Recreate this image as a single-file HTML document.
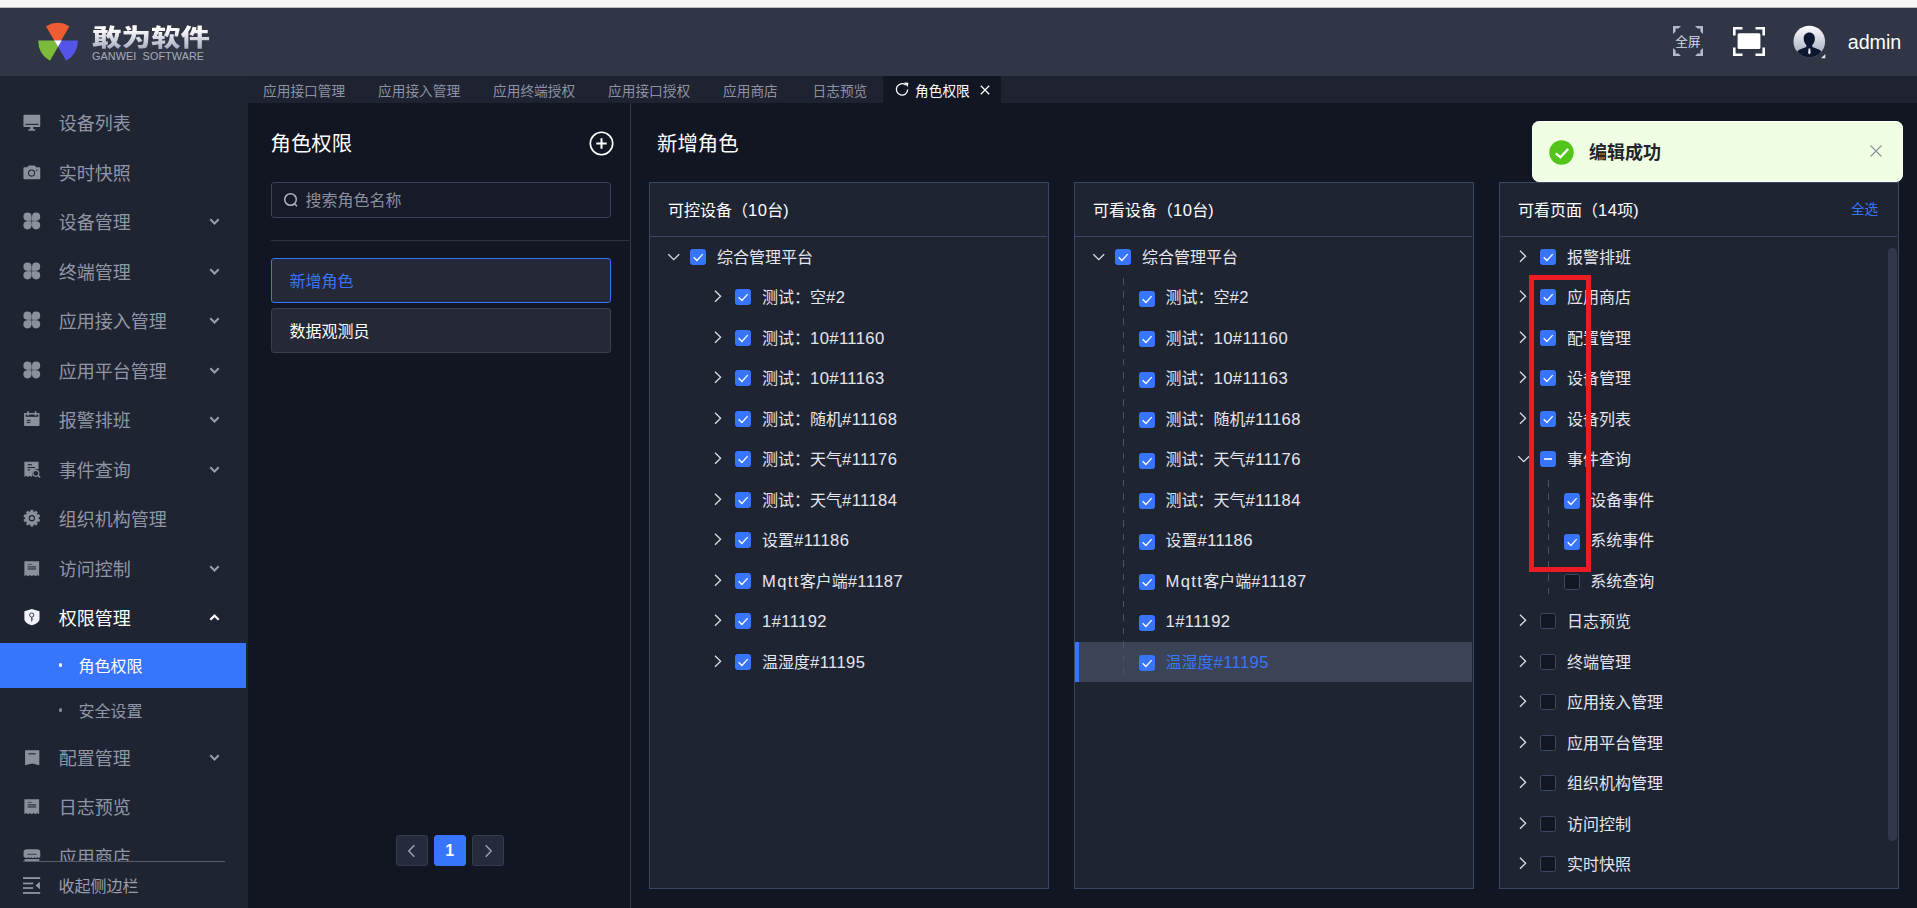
<!DOCTYPE html>
<html lang="zh-CN">
<head>
<meta charset="utf-8">
<title>角色权限</title>
<style>
*{box-sizing:border-box;margin:0;padding:0}
html,body{width:1917px;height:908px;overflow:hidden;background:#121622}
body{position:relative;font-family:"Liberation Sans","Noto Sans CJK SC",sans-serif;color:#fff;font-size:16px}
.abs{position:absolute}
#strip{position:absolute;left:0;top:0;width:1917px;height:8px;background:linear-gradient(#f7f7f7 0,#f7f7f7 7px,#bcbdc2 7px,#bcbdc2 8px)}
#header{position:absolute;left:0;top:8px;width:1917px;height:68px;background:#313647}
#sidebar{position:absolute;left:0;top:76px;width:248px;height:832px;background:#1f2432;overflow:hidden}
#tabbar{position:absolute;left:248px;top:76px;width:1669px;height:27px;background:#1e2231}
#main{position:absolute;left:248px;top:103px;width:1669px;height:805px;background:#121622}
/* header */
.logo-cn{position:absolute;left:91.500px;top:14.800px;font-size:23.600px;line-height:30px;font-weight:900;letter-spacing:0;white-space:nowrap;transform:scaleX(1.25);transform-origin:0 0;
  background:linear-gradient(#ffffff 20%,#a9adc0 85%);-webkit-background-clip:text;background-clip:text;color:transparent}
.logo-en{position:absolute;left:92px;top:42.300px;font-size:10.800px;line-height:12px;color:#a7abbd;white-space:pre;letter-spacing:.1px}
.admin{position:absolute;left:1847.700px;top:22.200px;font-size:19.700px;line-height:24px;color:#fff}
.fs-txt{position:absolute;left:1675.300px;top:26px;font-size:12.600px;line-height:16px;color:#d5d8e4;white-space:nowrap}
/* tabs */
.tab{position:absolute;top:0;height:27px;line-height:31.500px;font-size:13.7px;color:#8d92a3;white-space:nowrap}
.tab.on{background:#121622;color:#fff}
/* sidebar */
.mi{position:absolute;left:0;width:248px;height:49.5px}
.mi .t{position:absolute;left:58.800px;top:1.800px;line-height:49.5px;font-size:18px;color:#9196a6;white-space:nowrap}
.mi svg.ic{position:absolute;left:22.700px;top:15.900px;width:17.700px;height:17.700px;overflow:visible}
.mi svg.ch{position:absolute;left:209px;top:20px;width:11px;height:9px}
.mi.on .t{color:#fff}
.si{position:absolute;left:0;width:246px;height:45px}
.si .t{position:absolute;left:78.500px;top:0;line-height:47.500px;font-size:16px;color:#9196a6;white-space:nowrap}
.si .d{position:absolute;left:59px;top:20px;width:3.4px;height:4.6px;border-radius:1.6px;background:#858a9a}
.si.on{background:#3875ff}
.si.on .t{color:#fff}
.si.on .d{background:#fff}
/* role panel */
.h1{position:absolute;margin-top:1.200px;font-size:20.400px;line-height:28px;color:#fff;white-space:nowrap}
.role{position:absolute;left:23px;width:340px;height:45px;border:1px solid #3a3f50;border-radius:3px;background:#252836;font-size:16px;line-height:45.500px;padding-left:17.500px;color:#fff}
.role.on{border-color:#3875ff;color:#3875ff}
.pg{position:absolute;top:732px;width:31.500px;height:31px;border:1px solid #363b4d;border-radius:3px;background:#252a3c}
/* panels */
.panel{position:absolute;top:79px;width:400px;height:707px;border:1px solid #3b4661;background:#1f2433}
.panel .hd{position:absolute;left:0;top:0;width:397px;height:54px;border-bottom:1px solid #3b4661}
.panel .hd .t{position:absolute;left:18px;top:0;line-height:55.500px;font-size:16px;color:#fff;white-space:pre}
.row{position:absolute;left:0;width:398px;height:40.5px}
.row .t{position:absolute;top:.900px;line-height:40.500px;font-size:16px;color:#e4e6ee;white-space:nowrap}
.cb{position:absolute;width:16px;height:16px;border-radius:2.500px;background:#3875ff;border:1px solid #3875ff}
.cb.off{background:#131724;border-color:#3f4865}
.cb svg{position:absolute;left:-1px;top:-1px;width:16px;height:16px}
.arw{position:absolute;width:8px;height:14px}
.arw.dn{width:14px;height:8px}
.row.hl{background:#3b4356;border-left:4px solid #3875ff;height:40px;width:396.500px}
.row.hl .cb{margin-left:-4px}
.row.hl .t{color:#3875ff;margin-left:-4px}
.l{font-size:16.600px;letter-spacing:.4px}
.l.m{letter-spacing:1.35px}
.dash{position:absolute;width:1px;background:repeating-linear-gradient(180deg,#50535f 0,#50535f 6.600px,transparent 6.600px,transparent 13.450px)}
</style>
</head>
<body>
<div id="strip"></div>
<div id="header">
  <svg class="abs" style="left:34px;top:12px" width="48" height="48" viewBox="34 20 48 48">
    <path d="M57.7 46.5 L45.95 26.15 A23.5 23.5 0 0 1 69.45 26.15 Z" fill="#f05c32"/>
    <path d="M61.7 40.5 L38.2 40.5 A23.5 23.5 0 0 0 49.95 60.85 Z" fill="#7cbb3a"/>
    <path d="M54.4 40.5 L77.9 40.5 A23.5 23.5 0 0 1 66.15 60.85 Z" fill="#5454e8"/>
    <path d="M54.4 40.5 L61.7 40.5 L58 46.800 Z" fill="#fff"/>
  </svg>
  <div class="logo-cn">敢为软件</div>
  <div class="logo-en">GANWEI  SOFTWARE</div>
  <!-- fullscreen text icon -->
  <svg class="abs" style="left:1673px;top:18px" width="30" height="30" viewBox="0 0 30 30" fill="#b3b8cc">
    <path d="M0 0H8L5.5 2.6H2.6V5.5L0 8Z"/><path d="M30 0V8L27.4 5.5V2.6H24.5L22 0Z"/>
    <path d="M0 30V22L2.6 24.5V27.4H5.5L8 30Z"/><path d="M30 30H22L24.5 27.4H27.4V24.5L30 22Z"/>
  </svg>
  <div class="fs-txt">全屏</div>
  <svg class="abs" style="left:1733px;top:19px" width="32" height="29" viewBox="0 0 32 29" fill="none" stroke="#fff" stroke-width="2.6">
    <path d="M1.3 8.5V1.3H9.5M22.5 1.3H30.7V8.5M30.7 20.5V27.7H22.5M9.5 27.7H1.3V20.5"/>
    <rect x="4.6" y="6.3" width="22.8" height="15.6" rx="1.5" fill="#fff" stroke="none"/>
  </svg>
  <svg class="abs" style="left:1793px;top:17px" width="34" height="34" viewBox="0 0 34 34">
    <defs><linearGradient id="ag" x1="0" y1="0" x2="0" y2="1"><stop offset="0" stop-color="#fdfdfe"/><stop offset="1" stop-color="#9ea6bb"/></linearGradient>
    <clipPath id="ac"><circle cx="16.3" cy="16.5" r="15.8"/></clipPath></defs>
    <circle cx="16.3" cy="16.5" r="15.8" fill="url(#ag)"/>
    <g clip-path="url(#ac)" fill="#0e1730">
      <path d="M16.3 7.6c3.3 0 5.6 2.5 5.6 6 0 2.6-1.1 5-2.6 6.300v2.100l6.600 2.600c1.800.7 2.600 2 2.900 4v4.500h-25v-4.500c.3-2 1.100-3.300 2.900-4l6.600-2.600v-2.100c-1.500-1.300-2.600-3.700-2.600-6.300 0-3.500 2.300-6 5.600-6z"/>
    </g>
    <path d="M15.600 23.500h1.600l.5 4.500-1.300 1.600-1.300-1.600z" fill="#e6e9f0"/>
    <path d="M32.300 29v4.300h-4.300z" fill="#e3e6ee"/>
  </svg>
  <div class="admin">admin</div>
</div>
<div id="sidebar">
<div class="mi" style="top:22.25px"><svg class="ic" viewBox="0 0 18 18" fill="#8c909c"><path d="M1.3.85h15.400c.5 0 .85.350.85.850v10.750c0 .5-.350.850-.850.850H1.3c-.5 0-.85-.350-.85-.850V1.700c0-.5.350-.850.850-.850z"/><rect x="2.300" y="10" width="13.500" height="1.100" fill="#1f2432"/><path d="M7.400 13.300h3v2.100h2.100v1.600H5.300v-1.600h2.100z"/></svg><span class="t">设备列表</span></div>
<div class="mi" style="top:71.75px"><svg class="ic" viewBox="0 0 18 18" fill="#8c909c"><path d="M5.900 1.400h5.900l1.700 2h3.200c.5 0 .85.350.85.850v10.500c0 .5-.350.850-.850.850H1.300c-.5 0-.85-.350-.85-.850V4.250c0-.5.350-.850.850-.850h2.900z"/><circle cx="8.750" cy="9.200" r="3.650" fill="#1f2432"/><circle cx="8.750" cy="9.200" r="2.600"/><circle cx="14.100" cy="6.250" r=".75" fill="#1f2432"/></svg><span class="t">实时快照</span></div>
<div class="mi" style="top:121.25px"><svg class="ic" viewBox="0 0 18 18" fill="#8c909c"><circle cx="4.55" cy="3.75" r="4.15"/><rect x="4.55" y="3.75" width="4.15" height="4.15"/><circle cx="13.35" cy="3.75" r="4.15"/><rect x="9.20" y="3.75" width="4.15" height="4.15"/><circle cx="4.55" cy="12.55" r="4.15"/><rect x="4.55" y="8.40" width="4.15" height="4.15"/><circle cx="13.35" cy="12.55" r="4.15"/><rect x="9.20" y="8.40" width="4.15" height="4.15"/></svg><span class="t">设备管理</span><svg class="ch" viewBox="0 0 11 9" fill="none" stroke="#9a9eac" stroke-width="2"><path d="M1.300 2.300L5.500 6.500 9.700 2.300"/></svg></div>
<div class="mi" style="top:170.75px"><svg class="ic" viewBox="0 0 18 18" fill="#8c909c"><circle cx="4.55" cy="3.75" r="4.15"/><rect x="4.55" y="3.75" width="4.15" height="4.15"/><circle cx="13.35" cy="3.75" r="4.15"/><rect x="9.20" y="3.75" width="4.15" height="4.15"/><circle cx="4.55" cy="12.55" r="4.15"/><rect x="4.55" y="8.40" width="4.15" height="4.15"/><circle cx="13.35" cy="12.55" r="4.15"/><rect x="9.20" y="8.40" width="4.15" height="4.15"/></svg><span class="t">终端管理</span><svg class="ch" viewBox="0 0 11 9" fill="none" stroke="#9a9eac" stroke-width="2"><path d="M1.300 2.300L5.500 6.500 9.700 2.300"/></svg></div>
<div class="mi" style="top:220.25px"><svg class="ic" viewBox="0 0 18 18" fill="#8c909c"><circle cx="4.55" cy="3.75" r="4.15"/><rect x="4.55" y="3.75" width="4.15" height="4.15"/><circle cx="13.35" cy="3.75" r="4.15"/><rect x="9.20" y="3.75" width="4.15" height="4.15"/><circle cx="4.55" cy="12.55" r="4.15"/><rect x="4.55" y="8.40" width="4.15" height="4.15"/><circle cx="13.35" cy="12.55" r="4.15"/><rect x="9.20" y="8.40" width="4.15" height="4.15"/></svg><span class="t">应用接入管理</span><svg class="ch" viewBox="0 0 11 9" fill="none" stroke="#9a9eac" stroke-width="2"><path d="M1.300 2.300L5.500 6.500 9.700 2.300"/></svg></div>
<div class="mi" style="top:269.75px"><svg class="ic" viewBox="0 0 18 18" fill="#8c909c"><circle cx="4.55" cy="3.75" r="4.15"/><rect x="4.55" y="3.75" width="4.15" height="4.15"/><circle cx="13.35" cy="3.75" r="4.15"/><rect x="9.20" y="3.75" width="4.15" height="4.15"/><circle cx="4.55" cy="12.55" r="4.15"/><rect x="4.55" y="8.40" width="4.15" height="4.15"/><circle cx="13.35" cy="12.55" r="4.15"/><rect x="9.20" y="8.40" width="4.15" height="4.15"/></svg><span class="t">应用平台管理</span><svg class="ch" viewBox="0 0 11 9" fill="none" stroke="#9a9eac" stroke-width="2"><path d="M1.300 2.300L5.500 6.500 9.700 2.300"/></svg></div>
<div class="mi" style="top:319.25px"><svg class="ic" viewBox="0 0 18 18" fill="#8c909c"><path d="M1.100 2h15.700v12.400c0 .45-.350.800-.800.800H1.900c-.45 0-.8-.350-.8-.800z"/><rect x="2.750" y="3.600" width="12.750" height="2.300" fill="#1f2432"/><rect x="4.300" y="-.1" width="1.700" height="5" rx=".85"/><rect x="11.900" y="-.1" width="1.700" height="5" rx=".85"/><rect x="3.800" y="8.950" width="3.700" height="1.050" fill="#1f2432"/><rect x="3.800" y="11.100" width="3.700" height="1.050" fill="#1f2432"/></svg><span class="t">报警排班</span><svg class="ch" viewBox="0 0 11 9" fill="none" stroke="#9a9eac" stroke-width="2"><path d="M1.300 2.300L5.500 6.500 9.700 2.300"/></svg></div>
<div class="mi" style="top:368.75px"><svg class="ic" viewBox="0 0 18 18" fill="#8c909c"><path d="M1.400.65h14.400v7.600c-3.900-.9-7.400 2.500-6.100 6.300l-1.300 1.850-1.750-1.500-1.750 1.500-1.750-1.500-1.750 1.500z"/><rect x="4.700" y="3.250" width="4.500" height="1.100" fill="#1f2432"/><rect x="4.700" y="6.100" width="7.600" height="1.100" fill="#1f2432"/><rect x="4.700" y="8.450" width="2.500" height="1.100" fill="#1f2432"/><circle cx="13.100" cy="12.550" r="3.050" fill="none" stroke="#8c909c" stroke-width="1.150"/><path d="M15.300 14.800l2.200 2" stroke="#8c909c" stroke-width="1.300" fill="none"/></svg><span class="t">事件查询</span><svg class="ch" viewBox="0 0 11 9" fill="none" stroke="#9a9eac" stroke-width="2"><path d="M1.300 2.300L5.500 6.500 9.700 2.300"/></svg></div>
<div class="mi" style="top:418.25px"><svg class="ic" viewBox="0 0 18 18" fill="#8c909c"><path d="M7.97 0.16 L10.03 0.16 L10.30 1.93 L11.69 2.38 L12.95 1.11 L14.61 2.32 L13.79 3.91 L14.66 5.10 L16.42 4.81 L17.05 6.76 L15.46 7.57 L15.46 9.03 L17.05 9.84 L16.42 11.79 L14.66 11.50 L13.79 12.69 L14.61 14.28 L12.95 15.49 L11.69 14.22 L10.30 14.67 L10.03 16.44 L7.97 16.44 L7.70 14.67 L6.31 14.22 L5.05 15.49 L3.39 14.28 L4.21 12.69 L3.34 11.50 L1.58 11.79 L0.95 9.84 L2.54 9.03 L2.54 7.57 L0.95 6.76 L1.58 4.81 L3.34 5.10 L4.21 3.91 L3.39 2.32 L5.05 1.11 L6.31 2.38 L7.70 1.93Z" stroke="#8c909c" stroke-width=".8" stroke-linejoin="round"/><circle cx="9.0" cy="8.3" r="3.2" fill="#1f2432"/><circle cx="9.0" cy="8.3" r="2"/></svg><span class="t">组织机构管理</span></div>
<div class="mi" style="top:467.75px"><svg class="ic" viewBox="0 0 18 18" fill="#8c909c"><path d="M1.400 1.300h15v15.300l-1.900-1.400-1.850 1.400-1.900-1.400-1.850 1.400-1.900-1.400-1.850 1.400-1.900-1.400-1.850 1.400z"/><rect x="4.700" y="4" width="4.700" height="1.050" fill="#1f2432" opacity=".55"/><rect x="4.700" y="6.500" width="8.700" height="1.050" fill="#1f2432"/><rect x="4.700" y="8.600" width="8.700" height="1.050" fill="#1f2432"/></svg><span class="t">访问控制</span><svg class="ch" viewBox="0 0 11 9" fill="none" stroke="#9a9eac" stroke-width="2"><path d="M1.300 2.300L5.500 6.500 9.700 2.300"/></svg></div>
<div class="mi on" style="top:517.25px"><svg class="ic" viewBox="0 0 18 18" fill="#8c909c"><path d="M8.950 -.05l7.850 2.400v7.600c0 3.200-3.300 5.400-7.850 6.550C4.400 15.350 1.400 13.150 1.400 9.950v-7.600z" fill="#f1f3fb"/><circle cx="8.850" cy="6.150" r="2.150" fill="none" stroke="#3a2d55" stroke-width=".95"/><path d="M8.850 8.300v4.400M8.850 10.300h1.500" stroke="#3a2d55" stroke-width=".95" fill="none"/></svg><span class="t">权限管理</span><svg class="ch" viewBox="0 0 11 9" fill="none" stroke="#ffffff" stroke-width="2.200"><path d="M1.300 6.800L5.500 2.600 9.700 6.800"/></svg></div>
<div class="si on" style="top:566.75px"><i class="d"></i><span class="t">角色权限</span></div>
<div class="si" style="top:611.75px"><i class="d"></i><span class="t">安全设置</span></div>
<div class="mi" style="top:656.75px"><svg class="ic" viewBox="0 0 18 18" fill="#8c909c"><path d="M2.100 1.300h14.500v15.300L9.350 14.700 2.100 16.600z"/><rect x="5.500" y="4.400" width="7.400" height="1.100" fill="#1f2432"/></svg><span class="t">配置管理</span><svg class="ch" viewBox="0 0 11 9" fill="none" stroke="#9a9eac" stroke-width="2"><path d="M1.300 2.300L5.500 6.500 9.700 2.300"/></svg></div>
<div class="mi" style="top:706.25px"><svg class="ic" viewBox="0 0 18 18" fill="#8c909c"><path d="M1.400 1.300h15v15.300l-1.900-1.400-1.850 1.400-1.900-1.400-1.850 1.400-1.900-1.400-1.850 1.400-1.900-1.400-1.850 1.400z"/><rect x="4.700" y="4" width="4.700" height="1.050" fill="#1f2432" opacity=".55"/><rect x="4.700" y="6.500" width="8.700" height="1.050" fill="#1f2432"/><rect x="4.700" y="8.600" width="8.700" height="1.050" fill="#1f2432"/></svg><span class="t">日志预览</span></div>
<div class="mi" style="top:755.75px"><svg class="ic" viewBox="0 0 18 18" fill="#8c909c"><path d="M3.600 1.200h11c1.700 0 3 1.300 3 3v4.300c0 .9-.7 1.600-1.500 1.600-.700 0-1.200-.4-1.400-1-.2.600-.8 1-1.400 1h-.1c-.600 0-1.200-.4-1.400-1-.2.600-.8 1-1.400 1h-.6c-.600 0-1.200-.4-1.400-1-.2.600-.8 1-1.400 1h-.1c-.600 0-1.200-.4-1.400-1-.2.600-.7 1-1.400 1C1.300 10.100.6 9.400.6 8.500V4.200c0-1.700 1.300-3 3-3z"/><rect x="4.400" y="5.800" width="9.600" height="1.200" rx=".5" fill="#4a4f60"/><rect x="1.600" y="11.300" width="15" height="6"/></svg><span class="t">应用商店</span></div>
<div class="abs" style="left:0;top:785px;width:248px;height:47px;background:#1f2432"></div>
<div class="abs" style="left:23px;top:785px;width:202px;height:1px;background:#585c6c"></div>
<svg class="abs" style="left:22.800px;top:801px" width="18" height="18" viewBox="0 0 18 18" fill="#9599a6"><rect x="0" y=".2" width="17.200" height="1.750"/><rect x="0" y="5.650" width="10.200" height="1.650"/><rect x="0" y="10.200" width="10.200" height="1.650"/><rect x="0" y="15.100" width="17.200" height="1.750"/><path d="M12.600 8.550l4.300-3.800v7.600z"/></svg>
<div class="abs" style="left:58.500px;top:799.300px;font-size:16px;line-height:24px;color:#9a9eac;white-space:nowrap">收起侧边栏</div>
</div>
<div id="tabbar">
<div class="tab" style="left:15px">应用接口管理</div>
<div class="tab" style="left:130px">应用接入管理</div>
<div class="tab" style="left:245px">应用终端授权</div>
<div class="tab" style="left:360px">应用接口授权</div>
<div class="tab" style="left:475px">应用商店</div>
<div class="tab" style="left:564.5px">日志预览</div>
<div class="tab on" style="left:635px;width:118px"><svg class="abs" style="left:12px;top:6.300px" width="14.500" height="14.500" viewBox="0 0 14 14" fill="none" stroke="#fff" stroke-width="1.250"><path d="M12.300 7.300A5.500 5.500 0 1 1 10.300 2.900"/><path d="M8.800 0.500 L12.900 0.800 L12.300 4.800Z" fill="#fff" stroke="none"/></svg><span class="abs" style="left:32px;top:0">角色权限</span><svg class="abs" style="left:97px;top:9px" width="10" height="10" viewBox="0 0 10 10" stroke="#fff" stroke-width="1.300" fill="none"><path d="M.8.800l8.400 8.400M9.200.8L.8 9.200"/></svg></div>
</div>
<div id="main">
<div class="abs" style="left:382px;top:0;width:1px;height:805px;background:#323645"></div>
<div class="h1" style="left:22.500px;top:26px">角色权限</div>
<svg class="abs" style="left:340.800px;top:28.300px" width="25" height="25" viewBox="0 0 25 25" fill="none" stroke="#fff" stroke-width="1.600"><circle cx="12.500" cy="12.500" r="11.200"/><path d="M12.500 7.300v10.400M7.300 12.500h10.400" stroke-width="2"/></svg>
<div class="abs" style="left:23px;top:79px;width:340px;height:36px;border:1px solid #39415c;border-radius:3px;background:#161a29"></div>
<svg class="abs" style="left:35px;top:89px" width="16" height="16" viewBox="0 0 16 16" fill="none" stroke="#aeb2bf" stroke-width="1.500"><circle cx="7.500" cy="7.500" r="5.800"/><path d="M11.500 11.700l2.600 2.600"/></svg>
<div class="abs" style="left:57.500px;top:86px;font-size:16px;line-height:24px;color:#8b8f9d;white-space:nowrap">搜索角色名称</div>
<div class="abs" style="left:23px;top:137px;width:358px;height:1px;background:#2d3246"></div>
<div class="role on" style="top:155px">新增角色</div>
<div class="role" style="top:205px">数据观测员</div>
<div class="pg" style="left:148px"><svg class="abs" style="left:10px;top:8px" width="9" height="14" viewBox="0 0 9 14" fill="none" stroke="#9b9faf" stroke-width="1.500"><path d="M7.300 1.300L1.800 7l5.500 5.700"/></svg></div>
<div class="pg" style="left:186px;background:#3875ff;border-color:#3875ff;text-align:center;line-height:29px;font-size:16px;font-weight:700;color:#fff">1</div>
<div class="pg" style="left:224px"><svg class="abs" style="left:11px;top:8px" width="9" height="14" viewBox="0 0 9 14" fill="none" stroke="#9b9faf" stroke-width="1.500"><path d="M1.700 1.300L7.200 7l-5.500 5.700"/></svg></div>
<div class="h1" style="left:409px;top:26px">新增角色</div>
<div class="panel" style="left:401px"><div class="hd"><span class="t">可控设备（<span class="l">10</span>台)</span></div><div class="row" style="top:54px"><svg class="arw dn" style="left:17px;top:15.8px" viewBox="0 0 14 8" fill="none" stroke="#dcdde4" stroke-width="1.300"><path d="M1.300 1.200L6.750 6.600 12.200 1.200"/></svg><i class="cb" style="left:40px;top:11.7px"><svg viewBox="0 0 16 16" fill="none" stroke="#fff" stroke-width="1.250"><path d="M3.700 8.300L6.900 11.500 12.700 5.200"/></svg></i><span class="t" style="left:67px">综合管理平台</span></div><div class="row" style="top:94.5px"><svg class="arw" style="left:64px;top:11.6px" viewBox="0 0 8 14" fill="none" stroke="#dcdde4" stroke-width="1.300"><path d="M1 1.800L6.600 7.300 1 12.800"/></svg><i class="cb" style="left:85px;top:11.8px"><svg viewBox="0 0 16 16" fill="none" stroke="#fff" stroke-width="1.250"><path d="M3.700 8.300L6.900 11.500 12.700 5.200"/></svg></i><span class="t" style="left:112px">测试：空<span class="l">#2</span></span></div><div class="row" style="top:135px"><svg class="arw" style="left:64px;top:11.6px" viewBox="0 0 8 14" fill="none" stroke="#dcdde4" stroke-width="1.300"><path d="M1 1.800L6.600 7.300 1 12.800"/></svg><i class="cb" style="left:85px;top:11.8px"><svg viewBox="0 0 16 16" fill="none" stroke="#fff" stroke-width="1.250"><path d="M3.700 8.300L6.900 11.500 12.700 5.200"/></svg></i><span class="t" style="left:112px">测试：<span class="l">10#11160</span></span></div><div class="row" style="top:175.5px"><svg class="arw" style="left:64px;top:11.6px" viewBox="0 0 8 14" fill="none" stroke="#dcdde4" stroke-width="1.300"><path d="M1 1.800L6.600 7.300 1 12.800"/></svg><i class="cb" style="left:85px;top:11.8px"><svg viewBox="0 0 16 16" fill="none" stroke="#fff" stroke-width="1.250"><path d="M3.700 8.300L6.900 11.500 12.700 5.200"/></svg></i><span class="t" style="left:112px">测试：<span class="l">10#11163</span></span></div><div class="row" style="top:216px"><svg class="arw" style="left:64px;top:11.6px" viewBox="0 0 8 14" fill="none" stroke="#dcdde4" stroke-width="1.300"><path d="M1 1.800L6.600 7.300 1 12.800"/></svg><i class="cb" style="left:85px;top:11.8px"><svg viewBox="0 0 16 16" fill="none" stroke="#fff" stroke-width="1.250"><path d="M3.700 8.300L6.900 11.500 12.700 5.200"/></svg></i><span class="t" style="left:112px">测试：随机<span class="l">#11168</span></span></div><div class="row" style="top:256.5px"><svg class="arw" style="left:64px;top:11.6px" viewBox="0 0 8 14" fill="none" stroke="#dcdde4" stroke-width="1.300"><path d="M1 1.800L6.600 7.300 1 12.800"/></svg><i class="cb" style="left:85px;top:11.8px"><svg viewBox="0 0 16 16" fill="none" stroke="#fff" stroke-width="1.250"><path d="M3.700 8.300L6.900 11.500 12.700 5.200"/></svg></i><span class="t" style="left:112px">测试：天气<span class="l">#11176</span></span></div><div class="row" style="top:297px"><svg class="arw" style="left:64px;top:11.6px" viewBox="0 0 8 14" fill="none" stroke="#dcdde4" stroke-width="1.300"><path d="M1 1.800L6.600 7.300 1 12.800"/></svg><i class="cb" style="left:85px;top:11.8px"><svg viewBox="0 0 16 16" fill="none" stroke="#fff" stroke-width="1.250"><path d="M3.700 8.300L6.900 11.500 12.700 5.200"/></svg></i><span class="t" style="left:112px">测试：天气<span class="l">#11184</span></span></div><div class="row" style="top:337.5px"><svg class="arw" style="left:64px;top:11.6px" viewBox="0 0 8 14" fill="none" stroke="#dcdde4" stroke-width="1.300"><path d="M1 1.800L6.600 7.300 1 12.800"/></svg><i class="cb" style="left:85px;top:11.8px"><svg viewBox="0 0 16 16" fill="none" stroke="#fff" stroke-width="1.250"><path d="M3.700 8.300L6.900 11.500 12.700 5.200"/></svg></i><span class="t" style="left:112px">设置<span class="l">#11186</span></span></div><div class="row" style="top:378px"><svg class="arw" style="left:64px;top:11.6px" viewBox="0 0 8 14" fill="none" stroke="#dcdde4" stroke-width="1.300"><path d="M1 1.800L6.600 7.300 1 12.800"/></svg><i class="cb" style="left:85px;top:11.8px"><svg viewBox="0 0 16 16" fill="none" stroke="#fff" stroke-width="1.250"><path d="M3.700 8.300L6.900 11.500 12.700 5.200"/></svg></i><span class="t" style="left:112px"><span class="l m">Mqtt</span>客户端<span class="l">#11187</span></span></div><div class="row" style="top:418.5px"><svg class="arw" style="left:64px;top:11.6px" viewBox="0 0 8 14" fill="none" stroke="#dcdde4" stroke-width="1.300"><path d="M1 1.800L6.600 7.300 1 12.800"/></svg><i class="cb" style="left:85px;top:11.8px"><svg viewBox="0 0 16 16" fill="none" stroke="#fff" stroke-width="1.250"><path d="M3.700 8.300L6.900 11.500 12.700 5.200"/></svg></i><span class="t" style="left:112px"><span class="l">1#11192</span></span></div><div class="row" style="top:459px"><svg class="arw" style="left:64px;top:11.6px" viewBox="0 0 8 14" fill="none" stroke="#dcdde4" stroke-width="1.300"><path d="M1 1.800L6.600 7.300 1 12.800"/></svg><i class="cb" style="left:85px;top:11.8px"><svg viewBox="0 0 16 16" fill="none" stroke="#fff" stroke-width="1.250"><path d="M3.700 8.300L6.900 11.500 12.700 5.200"/></svg></i><span class="t" style="left:112px">温湿度<span class="l">#11195</span></span></div></div>
<div class="panel" style="left:826px"><div class="hd"><span class="t">可看设备（<span class="l">10</span>台)</span></div><div class="row" style="top:54px"><svg class="arw dn" style="left:17px;top:15.8px" viewBox="0 0 14 8" fill="none" stroke="#dcdde4" stroke-width="1.300"><path d="M1.300 1.200L6.750 6.600 12.200 1.200"/></svg><i class="cb" style="left:40px;top:11.7px"><svg viewBox="0 0 16 16" fill="none" stroke="#fff" stroke-width="1.250"><path d="M3.700 8.300L6.900 11.500 12.700 5.200"/></svg></i><span class="t" style="left:67px">综合管理平台</span></div><div class="row" style="top:94.5px"><i class="cb" style="left:64px;top:13.3px"><svg viewBox="0 0 16 16" fill="none" stroke="#fff" stroke-width="1.250"><path d="M3.700 8.300L6.900 11.500 12.700 5.200"/></svg></i><span class="t" style="left:90.500px">测试：空<span class="l">#2</span></span></div><div class="row" style="top:135px"><i class="cb" style="left:64px;top:13.3px"><svg viewBox="0 0 16 16" fill="none" stroke="#fff" stroke-width="1.250"><path d="M3.700 8.300L6.900 11.500 12.700 5.200"/></svg></i><span class="t" style="left:90.500px">测试：<span class="l">10#11160</span></span></div><div class="row" style="top:175.5px"><i class="cb" style="left:64px;top:13.3px"><svg viewBox="0 0 16 16" fill="none" stroke="#fff" stroke-width="1.250"><path d="M3.700 8.300L6.900 11.500 12.700 5.200"/></svg></i><span class="t" style="left:90.500px">测试：<span class="l">10#11163</span></span></div><div class="row" style="top:216px"><i class="cb" style="left:64px;top:13.3px"><svg viewBox="0 0 16 16" fill="none" stroke="#fff" stroke-width="1.250"><path d="M3.700 8.300L6.900 11.500 12.700 5.200"/></svg></i><span class="t" style="left:90.500px">测试：随机<span class="l">#11168</span></span></div><div class="row" style="top:256.5px"><i class="cb" style="left:64px;top:13.3px"><svg viewBox="0 0 16 16" fill="none" stroke="#fff" stroke-width="1.250"><path d="M3.700 8.300L6.900 11.500 12.700 5.200"/></svg></i><span class="t" style="left:90.500px">测试：天气<span class="l">#11176</span></span></div><div class="row" style="top:297px"><i class="cb" style="left:64px;top:13.3px"><svg viewBox="0 0 16 16" fill="none" stroke="#fff" stroke-width="1.250"><path d="M3.700 8.300L6.900 11.500 12.700 5.200"/></svg></i><span class="t" style="left:90.500px">测试：天气<span class="l">#11184</span></span></div><div class="row" style="top:337.5px"><i class="cb" style="left:64px;top:13.3px"><svg viewBox="0 0 16 16" fill="none" stroke="#fff" stroke-width="1.250"><path d="M3.700 8.300L6.900 11.500 12.700 5.200"/></svg></i><span class="t" style="left:90.500px">设置<span class="l">#11186</span></span></div><div class="row" style="top:378px"><i class="cb" style="left:64px;top:13.3px"><svg viewBox="0 0 16 16" fill="none" stroke="#fff" stroke-width="1.250"><path d="M3.700 8.300L6.900 11.500 12.700 5.200"/></svg></i><span class="t" style="left:90.500px"><span class="l m">Mqtt</span>客户端<span class="l">#11187</span></span></div><div class="row" style="top:418.5px"><i class="cb" style="left:64px;top:13.3px"><svg viewBox="0 0 16 16" fill="none" stroke="#fff" stroke-width="1.250"><path d="M3.700 8.300L6.900 11.500 12.700 5.200"/></svg></i><span class="t" style="left:90.500px"><span class="l">1#11192</span></span></div><div class="row hl" style="top:459px"><i class="cb" style="left:64px;top:13.3px"><svg viewBox="0 0 16 16" fill="none" stroke="#fff" stroke-width="1.250"><path d="M3.700 8.300L6.900 11.500 12.700 5.200"/></svg></i><span class="t" style="left:90.500px">温湿度<span class="l">#11195</span></span></div><div class="dash" style="left:48px;top:94.5px;height:404px"></div></div>
<div class="panel" style="left:1251px"><div class="hd"><span class="t">可看页面（<span class="l">14</span>项)</span><span class="abs" style="left:351px;top:0;line-height:53px;font-size:13.500px;color:#3875ff;white-space:nowrap">全选</span></div><div class="row" style="top:54px"><svg class="arw" style="left:19px;top:11.6px" viewBox="0 0 8 14" fill="none" stroke="#dcdde4" stroke-width="1.300"><path d="M1 1.800L6.600 7.300 1 12.800"/></svg><i class="cb" style="left:40px;top:11.7px"><svg viewBox="0 0 16 16" fill="none" stroke="#fff" stroke-width="1.250"><path d="M3.700 8.300L6.900 11.500 12.700 5.200"/></svg></i><span class="t" style="left:67px">报警排班</span></div><div class="row" style="top:94.5px"><svg class="arw" style="left:19px;top:11.6px" viewBox="0 0 8 14" fill="none" stroke="#dcdde4" stroke-width="1.300"><path d="M1 1.800L6.600 7.300 1 12.800"/></svg><i class="cb" style="left:40px;top:11.7px"><svg viewBox="0 0 16 16" fill="none" stroke="#fff" stroke-width="1.250"><path d="M3.700 8.300L6.900 11.500 12.700 5.200"/></svg></i><span class="t" style="left:67px">应用商店</span></div><div class="row" style="top:135px"><svg class="arw" style="left:19px;top:11.6px" viewBox="0 0 8 14" fill="none" stroke="#dcdde4" stroke-width="1.300"><path d="M1 1.800L6.600 7.300 1 12.800"/></svg><i class="cb" style="left:40px;top:11.7px"><svg viewBox="0 0 16 16" fill="none" stroke="#fff" stroke-width="1.250"><path d="M3.700 8.300L6.900 11.500 12.700 5.200"/></svg></i><span class="t" style="left:67px">配置管理</span></div><div class="row" style="top:175.5px"><svg class="arw" style="left:19px;top:11.6px" viewBox="0 0 8 14" fill="none" stroke="#dcdde4" stroke-width="1.300"><path d="M1 1.800L6.600 7.300 1 12.800"/></svg><i class="cb" style="left:40px;top:11.7px"><svg viewBox="0 0 16 16" fill="none" stroke="#fff" stroke-width="1.250"><path d="M3.700 8.300L6.900 11.500 12.700 5.200"/></svg></i><span class="t" style="left:67px">设备管理</span></div><div class="row" style="top:216px"><svg class="arw" style="left:19px;top:11.6px" viewBox="0 0 8 14" fill="none" stroke="#dcdde4" stroke-width="1.300"><path d="M1 1.800L6.600 7.300 1 12.800"/></svg><i class="cb" style="left:40px;top:11.7px"><svg viewBox="0 0 16 16" fill="none" stroke="#fff" stroke-width="1.250"><path d="M3.700 8.300L6.900 11.500 12.700 5.200"/></svg></i><span class="t" style="left:67px">设备列表</span></div><div class="row" style="top:256.5px"><svg class="arw dn" style="left:17px;top:15.8px" viewBox="0 0 14 8" fill="none" stroke="#dcdde4" stroke-width="1.300"><path d="M1.300 1.200L6.750 6.600 12.200 1.200"/></svg><i class="cb" style="left:40px;top:11.7px"><svg viewBox="0 0 16 16"><rect x="4" y="7" width="8" height="2" fill="#fff" opacity=".8"/></svg></i><span class="t" style="left:67px">事件查询</span></div><div class="row" style="top:297px"><i class="cb" style="left:64px;top:13.3px"><svg viewBox="0 0 16 16" fill="none" stroke="#fff" stroke-width="1.250"><path d="M3.700 8.300L6.900 11.500 12.700 5.200"/></svg></i><span class="t" style="left:90.300px">设备事件</span></div><div class="row" style="top:337.5px"><i class="cb" style="left:64px;top:13.3px"><svg viewBox="0 0 16 16" fill="none" stroke="#fff" stroke-width="1.250"><path d="M3.700 8.300L6.900 11.500 12.700 5.200"/></svg></i><span class="t" style="left:90.300px">系统事件</span></div><div class="row" style="top:378px"><i class="cb off" style="left:64px;top:13.3px"></i><span class="t" style="left:90.300px">系统查询</span></div><div class="row" style="top:418.5px"><svg class="arw" style="left:19px;top:11.6px" viewBox="0 0 8 14" fill="none" stroke="#dcdde4" stroke-width="1.300"><path d="M1 1.800L6.600 7.300 1 12.800"/></svg><i class="cb off" style="left:40px;top:11.7px"></i><span class="t" style="left:67px">日志预览</span></div><div class="row" style="top:459px"><svg class="arw" style="left:19px;top:11.6px" viewBox="0 0 8 14" fill="none" stroke="#dcdde4" stroke-width="1.300"><path d="M1 1.800L6.600 7.300 1 12.800"/></svg><i class="cb off" style="left:40px;top:11.7px"></i><span class="t" style="left:67px">终端管理</span></div><div class="row" style="top:499.5px"><svg class="arw" style="left:19px;top:11.6px" viewBox="0 0 8 14" fill="none" stroke="#dcdde4" stroke-width="1.300"><path d="M1 1.800L6.600 7.300 1 12.800"/></svg><i class="cb off" style="left:40px;top:11.7px"></i><span class="t" style="left:67px">应用接入管理</span></div><div class="row" style="top:540px"><svg class="arw" style="left:19px;top:11.6px" viewBox="0 0 8 14" fill="none" stroke="#dcdde4" stroke-width="1.300"><path d="M1 1.800L6.600 7.300 1 12.800"/></svg><i class="cb off" style="left:40px;top:11.7px"></i><span class="t" style="left:67px">应用平台管理</span></div><div class="row" style="top:580.5px"><svg class="arw" style="left:19px;top:11.6px" viewBox="0 0 8 14" fill="none" stroke="#dcdde4" stroke-width="1.300"><path d="M1 1.800L6.600 7.300 1 12.800"/></svg><i class="cb off" style="left:40px;top:11.7px"></i><span class="t" style="left:67px">组织机构管理</span></div><div class="row" style="top:621px"><svg class="arw" style="left:19px;top:11.6px" viewBox="0 0 8 14" fill="none" stroke="#dcdde4" stroke-width="1.300"><path d="M1 1.800L6.600 7.300 1 12.800"/></svg><i class="cb off" style="left:40px;top:11.7px"></i><span class="t" style="left:67px">访问控制</span></div><div class="row" style="top:661.5px"><svg class="arw" style="left:19px;top:11.6px" viewBox="0 0 8 14" fill="none" stroke="#dcdde4" stroke-width="1.300"><path d="M1 1.800L6.600 7.300 1 12.800"/></svg><i class="cb off" style="left:40px;top:11.7px"></i><span class="t" style="left:67px">实时快照</span></div><div class="dash" style="left:48px;top:297px;height:120.5px"></div><div class="abs" style="left:388px;top:65px;width:8.500px;height:593px;border-radius:4.300px;background:#313749"></div></div>
</div>
<div class="abs" style="left:1529px;top:275px;width:62px;height:297px;border:5px solid #ed1c24"></div>
<div class="abs" style="left:1532px;top:121px;width:371px;height:61px;border-radius:7.500px;background:#f0fee3;box-shadow:inset 0 0 0 1px rgba(255,255,255,.7)"><svg class="abs" style="left:16.500px;top:18.500px" width="25" height="25" viewBox="0 0 25 25"><circle cx="12.500" cy="12.500" r="12.200" fill="#52c41a"/><path d="M6.700 13.400l4.700 3.800 7.800-8.300" fill="none" stroke="#fff" stroke-width="2.300"/></svg><span class="abs" style="left:57px;top:18.500px;font-size:18px;line-height:26px;font-weight:700;color:#222428;white-space:nowrap">编辑成功</span><svg class="abs" style="left:338px;top:24.300px" width="12" height="12" viewBox="0 0 12 12" stroke="#8e919b" stroke-width="1.100" fill="none"><path d="M.5.500l11 11M11.500.5L.5 11.500"/></svg></div>
</body>
</html>
